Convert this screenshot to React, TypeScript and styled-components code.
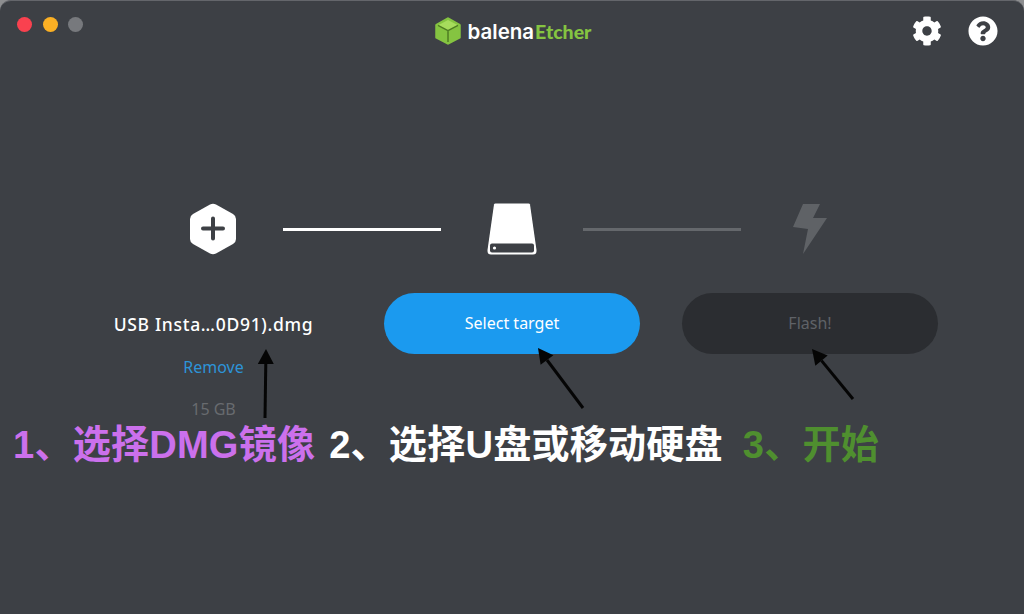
import styled, { createGlobalStyle } from 'styled-components';
import { FaCog, FaQuestionCircle } from 'react-icons/fa';

const GlobalStyle = createGlobalStyle`
  html, body {
    margin: 0;
    background: #8d8e90;
  }
`;

const Window = styled.div`
  position: relative;
  width: 1024px;
  height: 614px;
  box-sizing: border-box;
  overflow: hidden;
  background: #3d4045;
  border-top: 1px solid #64666b;
  border-radius: 11px 11px 0 0;
  font-family: 'Noto Sans', 'Open Sans', sans-serif;
`;

const TitleBar = styled.header`
  display: grid;
  grid-template-columns: 1fr auto 1fr;
  align-items: center;
  height: 60px;
  padding: 0 17px;
`;

const TrafficLights = styled.div`
  display: flex;
  gap: 10.5px;
  align-self: start;
  padding-top: 16px;
`;

const Light = styled.span<{ $color: string }>`
  width: 15px;
  height: 15px;
  border-radius: 50%;
  background: ${({ $color }) => $color};
`;

const Logo = styled.div`
  display: flex;
  align-items: center;
  gap: 7px;
  margin-left: 2px;
  font-family: 'Inter', sans-serif;
  font-size: 20.5px;
  font-weight: 600;
  color: #fff;
`;

const LogoGreen = styled.span`
  color: #85c441;
  font-family: 'Lato', sans-serif;
  font-size: 19.5px;
  font-weight: 900;
  margin-left: 1px;
`;

const LogoWord = styled.span`
  display: flex;
  align-items: baseline;
`;

const Tools = styled.div`
  display: flex;
  justify-content: flex-end;
  gap: 26px;
  padding-right: 9px;
  color: #fff;
  font-size: 30px;
  line-height: 0;
`;

const Main = styled.main`
  display: flex;
  flex-direction: column;
  padding: 142px 0 0 85px;
`;

const IconRow = styled.div`
  display: flex;
  align-items: center;
  height: 52px;
  padding-left: 98px;
`;

const IconCell = styled.div`
  display: flex;
  justify-content: center;
  width: 60px;
`;

const Connector = styled.div<{ $active?: boolean }>`
  width: 158px;
  height: 3px;
  margin: ${({ $active }) => ($active ? '0 41px 0 40px' : '0 39px 0 41px')};
  background: ${({ $active }) => ($active ? '#fff' : '#65686c')};
`;

const Actions = styled.div`
  display: grid;
  grid-template-columns: 257px 256px 256px;
  column-gap: 42px;
  margin-top: 38px;
`;

const FileColumn = styled.div`
  display: flex;
  flex-direction: column;
  align-items: center;
  padding-top: 18px;
`;

const FileName = styled.div`
  font-size: 17.5px;
  letter-spacing: 0.7px;
  line-height: 26px;
  font-weight: 500;
  color: #fff;
`;

const Remove = styled.div`
  margin-top: 18px;
  font-size: 16px;
  line-height: 24px;
  color: #2d94d8;
`;

const Size = styled.div`
  margin-top: 18px;
  font-size: 16px;
  line-height: 24px;
  color: #686b6f;
`;

const StepButton = styled.button<{ $primary?: boolean }>`
  height: 61px;
  padding-bottom: 3px;
  border: 0;
  border-radius: 31px;
  font-family: inherit;
  font-size: 16px;
  background: ${({ $primary }) => ($primary ? '#1b9aef' : '#2b2d31')};
  color: ${({ $primary }) => ($primary ? '#fff' : '#5f6267')};
`;

const Caption = styled.div`
  display: flex;
  margin: 0 0 0 -72px;
  font-family: 'Liberation Sans', 'Noto Sans CJK SC', sans-serif;
  font-size: 38.1px;
  letter-spacing: 0.2px;
  line-height: 48px;
  font-weight: 700;
  white-space: nowrap;
`;

const CaptionPart = styled.span<{ $color: string; $gap?: number }>`
  color: ${({ $color }) => $color};
  margin-left: ${({ $gap }) => $gap ?? 0}px;
`;

const Arrows = styled.svg`
  position: absolute;
  top: -1px;
  left: 0;
  pointer-events: none;
`;

function Arrow({ x1, y1, x2, y2 }: { x1: number; y1: number; x2: number; y2: number }) {
  // tail (x1,y1) -> tip (x2,y2)
  const len = Math.hypot(x2 - x1, y2 - y1);
  const ux = (x2 - x1) / len;
  const uy = (y2 - y1) / len;
  const bx = x2 - ux * 15;
  const by = y2 - uy * 15;
  const head = `${x2},${y2} ${bx - uy * 8},${by + ux * 8} ${bx + uy * 8},${by - ux * 8}`;
  return (
    <g>
      <line x1={x1} y1={y1} x2={bx} y2={by} stroke="#050505" strokeWidth={3} />
      <polygon points={head} fill="#050505" />
    </g>
  );
}

export default function App() {
  return (
    <Window>
      <GlobalStyle />
      <TitleBar>
        <TrafficLights>
          <Light $color="#f9414f" />
          <Light $color="#fbb024" />
          <Light $color="#77797d" />
        </TrafficLights>
        <Logo>
          <svg width="26" height="28" viewBox="0 0 26 28">
            <path d="M13 1.500 24.500 8v12.500L13 26.500 1.500 20.500V8z" fill="#85c441" stroke="#85c441" strokeWidth="2.500" strokeLinejoin="round" />
            <path d="M13 3 23 8.300 13 13.600 3 8.300z" fill="#a6dc5c" />
            <path d="M3 8.300 13 13.600V25M23 8.300 13 13.600" fill="none" stroke="#4f7d22" strokeWidth="1.500" />
          </svg>
          <LogoWord>
            balena<LogoGreen>Etcher</LogoGreen>
          </LogoWord>
        </Logo>
        <Tools>
          <FaCog />
          <FaQuestionCircle />
        </Tools>
      </TitleBar>
      <Main>
        <IconRow>
          <IconCell>
            <svg width="48" height="52" viewBox="0 0 48 52">
              <path
                d="M21 1.500Q24 0 27 1.500L44 11Q47 12.800 47 16V36Q47 39.200 44 41L27 50.500Q24 52 21 50.500L4 41Q1 39.200 1 36V16Q1 12.800 4 11Z"
                fill="#fff"
              />
              <path d="M24 15.500v20M14 25.500h20" stroke="#3d4045" strokeWidth="4" strokeLinecap="round" />
            </svg>
          </IconCell>
          <Connector $active />
          <IconCell>
            <svg width="50" height="52" viewBox="0 0 50 52">
              <path
                d="M7 1.500Q7.200 0.500 8.500 0.500H41.500Q42.800 0.500 43 1.500L49.500 47V48Q49.500 51.500 46 51.500H4Q0.500 51.500 0.500 48V47Z"
                fill="#fff"
              />
              <rect x="3" y="40.500" width="44" height="9" rx="2" fill="#3d4045" />
              <circle cx="7.500" cy="45" r="1.600" fill="#fff" />
            </svg>
          </IconCell>
          <Connector />
          <IconCell>
            <svg width="36" height="52" viewBox="0 0 36 52">
              <path d="M11 1H28L21 15H35L11 51 16 26 1 24Z" fill="#5f6266" />
            </svg>
          </IconCell>
        </IconRow>
        <Actions>
          <FileColumn>
            <FileName>USB Insta…0D91).dmg</FileName>
            <Remove>Remove</Remove>
            <Size>15 GB</Size>
          </FileColumn>
          <StepButton $primary>Select target</StepButton>
          <StepButton>Flash!</StepButton>
        </Actions>
        <Caption>
          <CaptionPart $color="#cb70ec">1、选择DMG镜像</CaptionPart>
          <CaptionPart $color="#ffffff" $gap={14}>2、选择U盘或移动硬盘</CaptionPart>
          <CaptionPart $color="#4f8f2f" $gap={20}>3、开始</CaptionPart>
        </Caption>
      </Main>
      <Arrows width="1024" height="614" viewBox="0 0 1024 614">
        <Arrow x1={265} y1={418} x2={266} y2={349} />
        <Arrow x1={583} y1={408} x2={538} y2={348} />
        <Arrow x1={853} y1={399} x2={812} y2={349} />
      </Arrows>
    </Window>
  );
}
